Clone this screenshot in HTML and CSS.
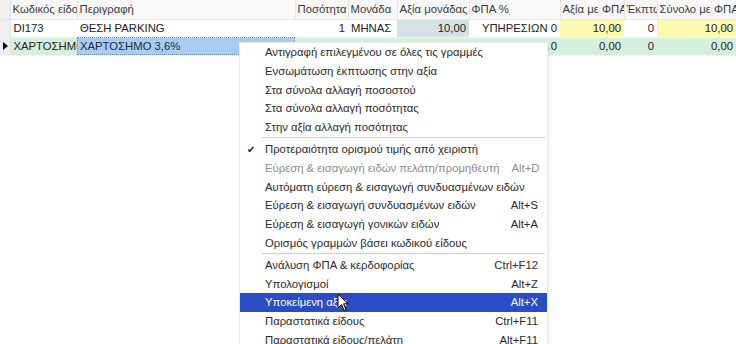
FILE: index.html
```html
<!DOCTYPE html>
<html lang="el">
<head>
    <meta charset="UTF-8">
    <title>Γραμμές παραστατικού</title>
    <link rel="stylesheet" href="styles.css">
</head>
<body>
    <div class="grid-wrap">
        <table class="grid">
            <colgroup>
                <col class="c-ind"><col class="c-code"><col class="c-desc"><col class="c-qty"><col class="c-unit">
                <col class="c-price"><col class="c-vat"><col class="c-gross"><col class="c-disc"><col class="c-total">
            </colgroup>
            <thead>
                <tr>
                    <th class="ind"></th>
                    <th>Κωδικός είδους</th>
                    <th>Περιγραφή</th>
                    <th>Ποσότητα</th>
                    <th>Μονάδα</th>
                    <th>Αξία μονάδας</th>
                    <th>ΦΠΑ %</th>
                    <th>Αξία με ΦΠΑ</th>
                    <th>Έκπτωση</th>
                    <th>Σύνολο με ΦΠΑ</th>
                </tr>
            </thead>
            <tbody>
                <tr>
                    <td class="ind"></td>
                    <td>DI173</td>
                    <td>ΘΕΣΗ PARKING</td>
                    <td class="num">1</td>
                    <td>ΜΗΝΑΣ</td>
                    <td class="num price">10,00</td>
                    <td class="num">ΥΠΗΡΕΣΙΩΝ 0</td>
                    <td class="num yellow">10,00</td>
                    <td class="num">0</td>
                    <td class="num yellow">10,00</td>
                </tr>
                <tr class="current">
                    <td class="ind"><span class="arrow"></span></td>
                    <td>ΧΑΡΤΟΣΗΜΟ</td>
                    <td class="selected"><span>ΧΑΡΤΟΣΗΜΟ 3,6%</span></td>
                    <td class="num">1</td>
                    <td>ΜΗΝΑΣ</td>
                    <td class="num">0,00</td>
                    <td class="num">ΧΑΡΤΟΣΗΜΑ 0</td>
                    <td class="num">0,00</td>
                    <td class="num">0</td>
                    <td class="num">0,00</td>
                </tr>
            </tbody>
        </table>
    </div>

    <ul class="menu">
        <li>Αντιγραφή επιλεγμένου σε όλες τις γραμμές</li>
        <li>Ενσωμάτωση έκπτωσης στην αξία</li>
        <li>Στα σύνολα αλλαγή ποσοστού</li>
        <li>Στα σύνολα αλλαγή ποσότητας</li>
        <li>Στην αξία αλλαγή ποσότητας</li>
        <li class="sep"></li>
        <li class="checked">Προτεραιότητα ορισμού τιμής από χειριστή</li>
        <li class="disabled">Εύρεση &amp; εισαγωγή ειδών πελάτη/προμηθευτή<span class="key">Alt+D</span></li>
        <li>Αυτόματη εύρεση &amp; εισαγωγή συνδυασμένων ειδών</li>
        <li>Εύρεση &amp; εισαγωγή συνδυασμένων ειδών<span class="key">Alt+S</span></li>
        <li>Εύρεση &amp; εισαγωγή γονικών ειδών<span class="key">Alt+A</span></li>
        <li>Ορισμός γραμμών βάσει κωδικού είδους</li>
        <li class="sep"></li>
        <li>Ανάλυση ΦΠΑ &amp; κερδοφορίας<span class="key">Ctrl+F12</span></li>
        <li>Υπολογισμοί<span class="key">Alt+Z</span></li>
        <li class="active">Υποκείμενη αξία<span class="key">Alt+X</span></li>
        <li>Παραστατικά είδους<span class="key">Ctrl+F11</span></li>
        <li>Παραστατικά είδους/πελάτη<span class="key">Alt+F11</span></li>
    </ul>

    <svg class="cursor" width="12" height="19" viewBox="0 0 12 19">
        <path d="M1 1 L1 15 L4.5 11.5 L7 17.5 L9 16.6 L6.6 10.8 L11 10.8 Z" fill="#fff" stroke="#000" stroke-width="1" stroke-linejoin="round"/>
    </svg>
</body>
</html>
```

FILE: styles.css
```css
* { margin: 0; padding: 0; box-sizing: border-box; }
body {
    font-family: "Liberation Sans", Arial, sans-serif;
    font-size: 11.3px;
    color: #222;
    background: #fff;
    width: 736px;
    height: 344px;
    overflow: hidden;
    position: relative;
}
.grid-wrap {
    width: 736px;
    overflow: hidden;
}
.grid {
    border-collapse: collapse;
    table-layout: fixed;
    width: 736px;
}
.c-ind { width: 10px; }
.c-code { width: 67px; }
.c-desc { width: 218px; }
.c-qty { width: 53px; }
.c-unit { width: 49px; }
.c-price { width: 72px; }
.c-vat { width: 91px; }
.c-gross { width: 64px; }
.c-disc { width: 33px; }
.c-total { width: 79px; }
.grid th, .grid td {
    height: 18px;
    padding: 0 3px;
    white-space: nowrap;
    overflow: hidden;
    text-overflow: clip;
    text-align: left;
    font-weight: normal;
}
.grid th {
    height: 19px;
    padding: 0 1px 0 2px;
    background: #f8f8f8;
    color: #3a3a3a;
    border-right: 1px solid #e4e4e4;
    border-bottom: 1px solid #e8e8e8;
}
.grid th:last-child { border-right: none; }
.grid td {
    border-bottom: 1px solid #f2f2f2;
}
.grid .ind {
    padding: 0;
    background: #f0f0f0;
    border-right: 1px solid #e0e0e0;
}
.grid .num { text-align: right; }
.grid td.price { background: #d2e2e5; }
.grid td.yellow { background: #fbf9ad; }
.current td { background: #d6f0e0; }
.current td.ind { background: #f0f0f0; }
.arrow {
    display: block;
    margin-left: 3px;
    width: 0;
    height: 0;
    border-top: 4px solid transparent;
    border-bottom: 4px solid transparent;
    border-left: 5px solid #000;
}
.current td.selected {
    background: #a7cdf3;
    outline: 1px dotted #6a8bb5;
    outline-offset: -1px;
    color: #1d2a3a;
}

.menu {
    list-style: none;
    position: absolute;
    left: 239px;
    top: 42px;
    width: 309px;
    background: #fff;
    border: 1px solid #ececec;
    box-shadow: 1px 1px 3px rgba(0, 0, 0, 0.08);
    color: #2a2a2a;
}
.menu li {
    display: flex;
    justify-content: space-between;
    align-items: center;
    height: 18.7px;
    padding: 0 9px 0 25px;
    white-space: nowrap;
    position: relative;
}
.menu li.sep {
    height: 2.5px;
    margin-left: 22px;
    margin-right: 2px;
    padding: 0;
    border-top: 1px solid #cfcfcf;
    margin-top: 1px;
}
.menu .disabled { color: #8d8d8d; }
.menu .checked::before {
    content: "\2714";
    position: absolute;
    left: 7px;
    font-size: 10px;
    color: #222;
}
.menu .active {
    background: #2a4cc6;
    color: #fff;
}
.key { margin-left: 12px; }

.cursor {
    position: absolute;
    left: 337px;
    top: 293px;
}
```
